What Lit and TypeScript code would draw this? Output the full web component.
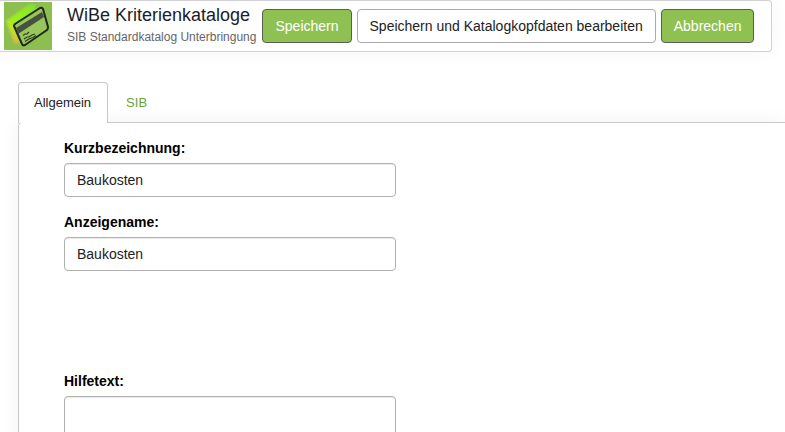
import { LitElement, html, css, svg, nothing } from "lit";
import { customElement, state } from "lit/decorators.js";

const logo = svg`
  <svg class="logo" viewBox="0 0 48 48" aria-hidden="true">
    <defs>
      <linearGradient id="glow" x1="0.8" y1="0" x2="0.3" y2="1">
        <stop offset="0" stop-color="#84e22c"></stop>
        <stop offset="0.5" stop-color="#9cf01c"></stop>
        <stop offset="0.75" stop-color="#c0e02c"></stop>
        <stop offset="1" stop-color="#d8b048"></stop>
      </linearGradient>
      <filter id="soft" x="-20%" y="-20%" width="140%" height="140%">
        <feGaussianBlur stdDeviation="0.9"></feGaussianBlur>
      </filter>
    </defs>
    <rect width="48" height="48" fill="#8cbf50"></rect>
    <path d="M2 19 L24 3 L30 2 L32 8 L11 22 L17 42 L10 41 Z" fill="url(#glow)" filter="url(#soft)"></path>
    <path d="M11 22 L36 6 Q38 5 39 7 L44 25 Q44 27 43 28 L21 43 Q19 44 18 42 L10 24 Q10 23 11 22 Z"
      fill="#98c65c" stroke="#1f2b18" stroke-width="2" stroke-linejoin="round"></path>
    <path d="M12 26 L38 10 L40 15 L14 32 Z" fill="#46523e"></path>
    <path d="M19 33.500 l2 -1.500 l2 0 l2 -2 M20 37 l3 -2 l2 0 l3 -2 l3 -1 M21 39.500 l3 -2 l2 -1 l3 -1 l3 -2"
      fill="none" stroke="#2c3a22" stroke-width="1.1"></path>
  </svg>`;

@customElement("app-root")
export class AppRoot extends LitElement {
  @state() private tab = 0;

  static styles = css`
    :host {
      display: block;
      height: 100vh;
      overflow: hidden;
      background: #fff;
      color: #222;
      font: 14px/20px "Liberation Sans", Arial, sans-serif;
    }
    * {
      box-sizing: border-box;
    }
    .bar {
      display: flex;
      align-items: center;
      height: 52px;
      margin-right: 13px;
      padding-left: 4px;
      border: 1px solid #d2d2d6;
      border-left: 0;
      border-radius: 0 4px 4px 0;
      box-shadow: 0 0 20px rgba(0, 0, 0, 0.04);
      white-space: nowrap;
    }
    .logo {
      flex: none;
      width: 48px;
      height: 48px;
      margin-right: 15px;
    }
    .heading {
      margin-right: 6px;
      padding-bottom: 2px;
    }
    h1 {
      margin: 0;
      font-size: 18px;
      line-height: 24px;
      font-weight: 400;
      color: #1c1c28;
    }
    .sub {
      margin: 0;
      font-size: 12px;
      line-height: 20px;
      color: #666;
    }
    .actions {
      display: flex;
      gap: 5px;
    }
    .btn {
      height: 34px;
      padding: 0 12px;
      border: 1px solid #aaa;
      border-radius: 4px;
      background: #fff;
      color: #222;
      font: inherit;
    }
    .primary {
      background: #8fc152;
      border-color: #5a5f55;
      color: #fff;
    }
    .tabs {
      display: flex;
      gap: 2px;
      margin: 30px 0 0 18px;
    }
    .tab {
      height: 41px;
      margin-bottom: -1px;
      padding: 0 15px;
      border: 1px solid transparent;
      border-bottom: 0;
      border-radius: 4px 4px 0 0;
      background: none;
      color: #6aa332;
      font: inherit;
      font-size: 13px;
    }
    .tab.active {
      padding-right: 16px;
      border-color: #c8c8c8;
      background: #fff;
      color: #222;
      z-index: 1;
    }
    .panel {
      min-height: 100vh;
      margin-left: 18px;
      padding: 15px 45px;
      border: 1px solid #c8c8c8;
      border-right: 0;
      border-top-left-radius: 4px;
      box-shadow: 0 0 20px rgba(0, 0, 0, 0.05);
    }
    .field {
      display: flex;
      flex-direction: column;
      gap: 5px;
      max-width: 332px;
      margin-bottom: 15px;
    }
    .spaced {
      margin-top: 100px;
    }
    label {
      font-weight: 700;
      color: #000;
    }
    .control {
      width: 100%;
      height: 34px;
      padding: 6px 12px;
      border: 1px solid #b0b0b0;
      border-radius: 4px;
      background: #fff;
      box-shadow: inset 0 1px 1px rgba(0, 0, 0, 0.08);
      color: #222;
      font: inherit;
    }
    .area {
      height: 100px;
      resize: none;
    }
  `;

  private renderTab(name: string, index: number) {
    const active = this.tab === index;
    return html`<button
      class="tab ${active ? "active" : ""}"
      role="tab"
      aria-selected=${active}
      @click=${() => (this.tab = index)}
    >${name}</button>`;
  }

  render() {
    return html`
      <header class="bar">
        ${logo}
        <div class="heading">
          <h1>WiBe Kriterienkataloge</h1>
          <p class="sub">SIB Standardkatalog Unterbringung</p>
        </div>
        <div class="actions">
          <button class="btn primary">Speichern</button>
          <button class="btn">Speichern und Katalogkopfdaten bearbeiten</button>
          <button class="btn primary">Abbrechen</button>
        </div>
      </header>
      <main>
        <div class="tabs" role="tablist">
          ${this.renderTab("Allgemein", 0)}${this.renderTab("SIB", 1)}
        </div>
        <form class="panel" role="tabpanel">
          ${this.tab === 0
            ? html`
                <div class="field">
                  <label for="short">Kurzbezeichnung:</label>
                  <input id="short" class="control" type="text" value="Baukosten" />
                </div>
                <div class="field">
                  <label for="display">Anzeigename:</label>
                  <input id="display" class="control" type="text" value="Baukosten" />
                </div>
                <div class="field spaced">
                  <label for="help">Hilfetext:</label>
                  <textarea id="help" class="control area"></textarea>
                </div>
              `
            : nothing}
        </form>
      </main>
    `;
  }
}
